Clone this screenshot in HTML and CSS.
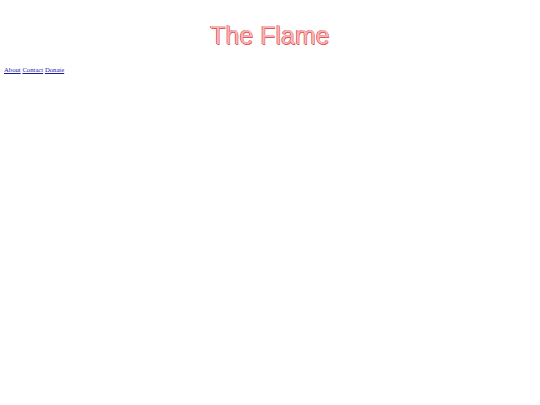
FILE: index.html
```html
<!DOCTYPE html>
<html>
<head>
<meta charset="utf-8">
<link rel="stylesheet" href="styles.css">
<title>The Flame</title>
</head>
<body>
<header class="site-header">
  <h1 class="site-title">The Flame</h1>
</header>
<nav class="site-nav">
  <a href="#">About</a>
  <a href="#">Contact</a>
  <a href="#">Donate</a>
</nav>
</body>
</html>
```
FILE: styles.css
```css
html, body {
  background: #ffffff;
}
body {
  margin: 0;
  padding: 0 4px;
}
.site-header {
  padding-top: 20px;
}
.site-title {
  margin: 0;
  text-align: center;
  font-family: "Liberation Sans", Arial, sans-serif;
  font-weight: normal;
  font-size: 25px;
  line-height: 30px;
  color: #f6b4b4;
  text-shadow: -0.5px 0 0.4px #d82828, 0.5px 0.5px 0.4px #e05a5a;
}
.site-nav {
  margin-top: 16px;
  font-family: "Liberation Serif", "Times New Roman", serif;
  font-size: 6.7px;
  line-height: 8px;
}
.site-nav a {
  color: #1a1aa6;
}
```
